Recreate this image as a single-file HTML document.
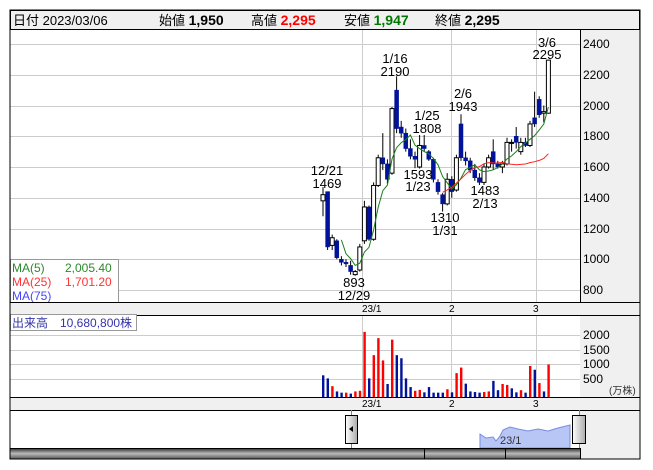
<!DOCTYPE html>
<html><head><meta charset="utf-8"><style>
body{margin:0;background:#fff;width:653px;height:470px;overflow:hidden}
svg{display:block;font-family:"Liberation Sans","Noto Sans CJK JP",sans-serif}
</style></head><body>
<svg id="s" width="653" height="470" xmlns="http://www.w3.org/2000/svg">
<rect x="10" y="10" width="630" height="449" fill="#fff" stroke="#000"/>
<rect x="10.5" y="10.5" width="629" height="19" fill="#f0f0f0" stroke="#000"/>
<text x="13" y="25" font-size="13" fill="#000">日付 2023/03/06</text>
<text x="159" y="25" font-size="13">始値 <tspan font-weight="bold" font-size="14">1,950</tspan></text>
<text x="251" y="25" font-size="13">高値 <tspan font-weight="bold" font-size="14" fill="#f00">2,295</tspan></text>
<text x="344" y="25" font-size="13">安値 <tspan font-weight="bold" font-size="14" fill="#070">1,947</tspan></text>
<text x="435" y="25" font-size="13">終値 <tspan font-weight="bold" font-size="14">2,295</tspan></text>
<rect x="580" y="30" width="60" height="272" fill="#f0f0f0"/>
<line x1="580.5" y1="30" x2="580.5" y2="397" stroke="#000"/>
<g id="grid" stroke="#ccc" stroke-width="1"></g>
<g font-size="12" fill="#000">
<text x="583" y="48">2400</text><text x="583" y="79">2200</text><text x="583" y="110">2000</text><text x="583" y="140">1800</text><text x="583" y="171">1600</text><text x="583" y="202">1400</text><text x="583" y="233">1200</text><text x="583" y="263">1000</text><text x="583" y="294">800</text>
</g>
<g id="cand"></g>
<g font-size="13" fill="#000" text-anchor="middle">
<text x="327" y="175">12/21</text><text x="327" y="188">1469</text>
<text x="354" y="287">893</text><text x="354" y="300">12/29</text>
<text x="395" y="63">1/16</text><text x="395" y="76">2190</text>
<text x="427" y="120">1/25</text><text x="427" y="133">1808</text>
<text x="418" y="179">1593</text><text x="418" y="191">1/23</text>
<text x="445" y="222">1310</text><text x="445" y="235">1/31</text>
<text x="463" y="98">2/6</text><text x="463" y="111">1943</text>
<text x="485" y="195">1483</text><text x="485" y="208">2/13</text>
<text x="547" y="47">3/6</text><text x="547" y="59">2295</text>
</g>
<rect x="10.5" y="259.5" width="108" height="43" fill="#fff" stroke="#999"/>
<g font-size="12"><text x="12" y="272" fill="#2a8a2a">MA(5)</text><text x="65" y="272" fill="#2a8a2a">2,005.40</text>
<text x="12" y="286" fill="#f33">MA(25)</text><text x="65" y="286" fill="#f33">1,701.20</text>
<text x="12" y="300" fill="#44f">MA(75)</text></g>
<rect x="10" y="302" width="630" height="13" fill="#f0f0f0"/>
<line x1="10" y1="302.5" x2="640" y2="302.5" stroke="#000"/>
<line x1="10" y1="315.5" x2="640" y2="315.5" stroke="#000"/>
<g font-size="10" fill="#000"><text x="362" y="312">23/1</text><text x="449" y="312">2</text><text x="533" y="312">3</text></g>
<rect x="580" y="316" width="60" height="81" fill="#f0f0f0"/>
<g stroke="#ccc"><line x1="10" x2="580" y1="335.5" y2="335.5"/><line x1="10" x2="580" y1="350.5" y2="350.5"/><line x1="10" x2="580" y1="364.5" y2="364.5"/><line x1="10" x2="580" y1="379.5" y2="379.5"/>
<line x1="362.5" x2="362.5" y1="316" y2="397"/><line x1="451.5" x2="451.5" y1="316" y2="397"/><line x1="536.5" x2="536.5" y1="316" y2="397"/></g>
<g font-size="12"><text x="583" y="339">2000</text><text x="583" y="354">1500</text><text x="583" y="368">1000</text><text x="583" y="383">500</text><text x="609" y="394" font-size="10" fill="#333">(万株)</text></g>
<g id="vol"></g>
<rect x="10.5" y="314.5" width="126" height="16" fill="#fff" stroke="#999"/>
<text x="12" y="327" font-size="12" fill="#33a">出来高　10,680,800株</text>
<rect x="10" y="397" width="630" height="13" fill="#f0f0f0"/>
<line x1="10" y1="397.5" x2="640" y2="397.5" stroke="#000"/>
<line x1="10" y1="410.5" x2="640" y2="410.5" stroke="#000"/>
<g font-size="10"><text x="362" y="407">23/1</text><text x="449" y="407">2</text><text x="533" y="407">3</text></g>
<rect x="580" y="411" width="60" height="48" fill="#f0f0f0"/>
<path d="M480,448 L480,434 L486,438 L493,437 L496,441 L500,436 L503,430 L510,427 L518,429 L528,431 L538,429 L548,431 L558,428 L570,425 L570,448 Z" fill="#b8c6f6" stroke="#7a8be0" stroke-width="1"/>
<text x="500" y="444" font-size="11" fill="#333">23/1</text>
<line x1="351.5" y1="410" x2="351.5" y2="448" stroke="#2aa0d0"/>
<line x1="579.5" y1="410" x2="579.5" y2="448" stroke="#2aa0d0"/>
<defs><linearGradient id="g1" x1="0" y1="0" x2="1" y2="0"><stop offset="0" stop-color="#fff"/><stop offset="1" stop-color="#aaa"/></linearGradient>
<linearGradient id="g2" x1="0" y1="0" x2="0" y2="1"><stop offset="0" stop-color="#222"/><stop offset="0.5" stop-color="#bbb"/><stop offset="1" stop-color="#555"/></linearGradient></defs>
<rect x="345.5" y="415.5" width="12" height="28" fill="url(#g1)" stroke="#000"/>
<path d="M349,429 L353,426 L353,432 Z" fill="#000"/>
<rect x="572.5" y="415.5" width="13" height="28" fill="url(#g1)" stroke="#000"/>
<rect x="10" y="448" width="570" height="11" fill="url(#g2)"/>
<line x1="10" y1="448.5" x2="580" y2="448.5" stroke="#000"/>
<line x1="424.5" y1="448" x2="424.5" y2="459" stroke="#000"/>
<line x1="505.5" y1="448" x2="505.5" y2="459" stroke="#000"/>
<line x1="580.5" y1="448" x2="580.5" y2="459" stroke="#000"/>
<rect x="10" y="10" width="630" height="449" fill="none" stroke="#000"/>
</svg>
<script>
var NS="http://www.w3.org/2000/svg";
function el(p,t,a){var e=document.createElementNS(NS,t);for(var k in a)e.setAttribute(k,a[k]);p.appendChild(e);return e;}
var Y=function(p){return 44+(2400-p)*0.15375;};
var g=document.getElementById('grid');
for(var p=2400;p>=800;p-=200){var y=Math.round(Y(p))+0.5;el(g,'line',{x1:10,x2:580,y1:y,y2:y});}
[362.5,451.5,536.5].forEach(function(x){el(g,'line',{x1:x,x2:x,y1:30,y2:302});});
var d=[[1380,1469,1280,1420],[1440,1440,1060,1080],[1090,1160,1060,1140],[1120,1130,1000,1010],[1000,1020,960,980],[980,1000,950,970],[960,990,900,920],[900,930,893,920],
[930,1100,920,1080],[1120,1380,1100,1340],[1340,1350,1120,1130],[1130,1500,1120,1480],[1480,1680,1470,1660],[1660,1820,1580,1620],[1620,1650,1490,1520],
[1560,1990,1550,1980],[2100,2190,1820,1850],[1860,1900,1790,1820],[1820,1850,1700,1720],[1720,1780,1650,1670],[1670,1700,1593,1650],[1600,1808,1590,1740],
[1740,1808,1700,1720],[1700,1710,1640,1650],[1650,1660,1500,1520],[1500,1520,1420,1440],[1420,1430,1310,1360],[1360,1560,1350,1520],[1520,1540,1400,1440],
[1450,1680,1440,1660],[1880,1943,1640,1660],[1660,1700,1610,1640],[1640,1660,1560,1580],[1580,1620,1510,1530],[1530,1560,1483,1500],[1500,1620,1483,1600],
[1600,1680,1590,1660],[1700,1780,1580,1620],[1620,1640,1590,1600],[1600,1640,1560,1620],[1620,1790,1610,1760],[1760,1780,1700,1760],[1800,1860,1720,1760],
[1700,1790,1680,1760],[1760,1790,1730,1740],[1740,1900,1730,1880],[1920,2090,1860,1880],[2040,2060,1920,1940],[1950,2000,1890,1960],[1950,2295,1947,2295]];
var c=document.getElementById('cand');var X=function(i){return 323+i*4.6;};
var cl=d.map(function(r){return r[3];});
function ma(n,col,st){var pts=[];for(var i=n-1;i<d.length;i++){if(i<st)continue;var s=0;for(var j=i-n+1;j<=i;j++)s+=cl[j];pts.push(X(i).toFixed(1)+','+Y(s/n).toFixed(1));}
el(c,'polyline',{points:pts.join(' '),fill:'none',stroke:col,'stroke-width':1});}
d.forEach(function(r,i){var x=X(i),o=r[0],h=r[1],l=r[2],k=r[3];var w=o>k;
el(c,'line',{x1:x,x2:x,y1:Y(h),y2:Y(l),stroke:'#000','stroke-width':1});
var t=Y(Math.max(o,k)),b=Y(Math.min(o,k));if(b-t<1)b=t+1;
el(c,'rect',{x:x-2,y:t,width:4,height:b-t,fill:w?'#00139a':'#fff',stroke:w?'#00139a':'#000','stroke-width':w?0.5:1});});
ma(5,'#1a801a',4);ma(25,'#f22',26);
var v=[700,600,350,180,140,140,110,180,200,2100,600,1350,1900,1180,420,1850,1350,1250,600,320,200,230,150,320,140,140,140,250,150,770,950,430,180,160,140,160,180,520,220,420,390,280,150,220,140,1000,880,450,180,1050];
var cs="bbrbbrbrrrbrrrbrbbbbrrbbbbbrbrrbbbbrrbbrrbbrbrbrbr";
var vg=document.getElementById('vol');
v.forEach(function(q,i){var h=q*0.031;el(vg,'rect',{x:X(i)-1,y:397-h,width:2.4,height:h,fill:cs[i]=='r'?'#f00':'#00139a'});});
</script>
</body></html>
